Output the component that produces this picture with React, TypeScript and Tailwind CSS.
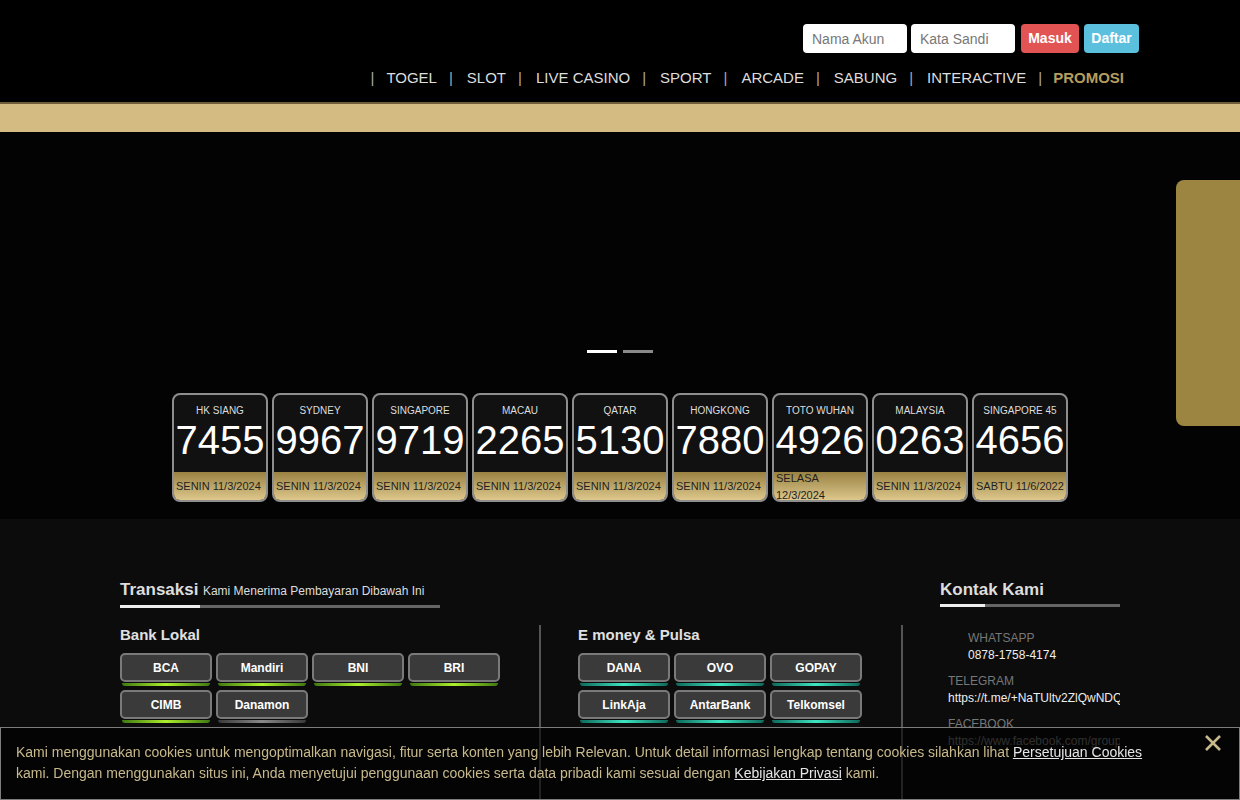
import React, { ReactElement } from "react";

const menu = ["TOGEL", "SLOT", "LIVE CASINO", "SPORT", "ARCADE", "SABUNG", "INTERACTIVE"];

const results = [
  { name: "HK SIANG", num: "7455", date: "SENIN 11/3/2024" },
  { name: "SYDNEY", num: "9967", date: "SENIN 11/3/2024" },
  { name: "SINGAPORE", num: "9719", date: "SENIN 11/3/2024" },
  { name: "MACAU", num: "2265", date: "SENIN 11/3/2024" },
  { name: "QATAR", num: "5130", date: "SENIN 11/3/2024" },
  { name: "HONGKONG", num: "7880", date: "SENIN 11/3/2024" },
  { name: "TOTO WUHAN", num: "4926", date: "SELASA 12/3/2024" },
  { name: "MALAYSIA", num: "0263", date: "SENIN 11/3/2024" },
  { name: "SINGAPORE 45", num: "4656", date: "SABTU 11/6/2022" },
];

const banks = [
  { name: "BCA", on: true },
  { name: "Mandiri", on: true },
  { name: "BNI", on: true },
  { name: "BRI", on: true },
  { name: "CIMB", on: true },
  { name: "Danamon", on: false },
];

const emoney = ["DANA", "OVO", "GOPAY", "LinkAja", "AntarBank", "Telkomsel"];

function PayButton(props: { name: string; glow: "green" | "gray" | "teal" }): ReactElement {
  const { name, glow } = props;
  return (
    <div className="w-[92px]">
      <div className="h-[29px] rounded-[5px] border-2 border-[#7a7a7a] bg-[#3a3a3a] flex items-center justify-center text-[12px] font-bold text-white">
        {name}
      </div>
      {glow === "green" && (
        <div className="mx-[2px] mt-[1px] h-[3px] rounded-b-[3px] bg-linear-to-r from-[#3f7a12] via-[#aef02c] to-[#3f7a12]" />
      )}
      {glow === "teal" && (
        <div className="mx-[2px] mt-[1px] h-[3px] rounded-b-[3px] bg-linear-to-r from-[#0d6b5b] via-[#3fe6c4] to-[#0d6b5b]" />
      )}
      {glow === "gray" && (
        <div className="mx-[2px] mt-[1px] h-[3px] rounded-b-[3px] bg-linear-to-r from-[#3a3a3a] via-[#8a8a8a] to-[#3a3a3a]" />
      )}
    </div>
  );
}

function ResultCard(props: { name: string; num: string; date: string }): ReactElement {
  const { name, num, date } = props;
  return (
    <div className="w-[96px] h-[109px] rounded-[8px] border-2 border-[#8e8e8e] bg-[#111111] overflow-hidden flex flex-col">
      <div className="pt-[10px] text-[10px] leading-[12px] text-center text-[#dddddd]">{name}</div>
      <div className="mt-[3px] text-[40px] leading-[40px] text-center text-white">{num}</div>
      <div className="mt-auto h-[28px] overflow-hidden flex items-center pl-[2px] bg-linear-to-b from-[#9a8243] to-[#dec78b] text-[11px] leading-[17px] text-[#1e1e1e]">
        <span className="pt-[1px]">{date}</span>
      </div>
    </div>
  );
}

export default function App(): ReactElement {
  return (
    <div className="min-h-screen bg-[#030303] font-['Liberation_Sans',Arial,sans-serif]">
      {/* header */}
      <header className="h-[102px] bg-black">
        <div className="flex justify-end pt-[24px] pr-[101px]">
          <input
            placeholder="Nama Akun"
            className="w-[104px] h-[29px] rounded-[4px] bg-white pl-[9px] text-[14px] text-[#333] placeholder:text-[#777] outline-none"
          />
          <input
            placeholder="Kata Sandi"
            className="ml-[4px] w-[104px] h-[29px] rounded-[4px] bg-white pl-[9px] text-[14px] text-[#333] placeholder:text-[#777] outline-none"
          />
          <button className="ml-[6px] w-[58px] h-[29px] rounded-[4px] bg-[#e25454] text-white text-[14px] font-bold">
            Masuk
          </button>
          <button className="ml-[5px] w-[55px] h-[29px] rounded-[4px] bg-[#5bc0de] text-white text-[14px] font-bold">
            Daftar
          </button>
        </div>
        <nav className="flex justify-end mt-[16px] pr-[116px] text-[15px] leading-[17px] text-[#dddddd]">
          {menu.map((m, i) => (
            <React.Fragment key={m}>
              <span className={(i === 0 ? "ml-[12px] mr-[12px]" : "ml-[12px] mr-[14px]") + " text-[#aaaaaa]"}>|</span>
              <a>{m}</a>
            </React.Fragment>
          ))}
          <span className="ml-[12px] mr-[11px] text-[#aaaaaa]">|</span>
          <a className="font-bold text-[#b49d5f]">PROMOSI</a>
        </nav>
      </header>
      <div className="h-[30px] bg-[#d4bb82] border-t-2 border-[#6e5d38]" />

      {/* slider */}
      <div className="h-[255px] flex justify-center gap-[6px] pt-[218px]">
        <div className="w-[30px] h-[3px] bg-white" />
        <div className="w-[30px] h-[3px] bg-[#8a8a8a]" />
      </div>

      {/* results */}
      <div className="flex justify-center gap-[4px] pt-[6px] pb-[17px]">
        {results.map((r) => (
          <ResultCard key={r.name} {...r} />
        ))}
      </div>

      {/* footer */}
      <footer className="bg-[#0c0c0c] pt-[61px] pb-[80px]">
        <div className="flex pl-[120px]">
          <div className="w-[783px]">
            <div className="leading-[20px] text-[#dddddd]">
              <span className="text-[17px] font-bold">Transaksi</span>{" "}
              <span className="text-[12px]">Kami Menerima Pembayaran Dibawah Ini</span>
            </div>
            <div className="mt-[4px] flex w-[320px] h-[3px]">
              <div className="w-[80px] bg-[#eeeeee]" />
              <div className="flex-1 bg-[#666666]" />
            </div>
            <div className="mt-[17px] flex">
              <div className="w-[421px] h-[200px] border-r-2 border-[#555555] pt-[1px]">
                <div className="text-[15px] leading-[18px] font-bold text-[#e0e0e0]">Bank Lokal</div>
                <div className="mt-[9px] flex flex-wrap w-[400px] gap-x-[4px] gap-y-[4px]">
                  {banks.map((b) => (
                    <PayButton key={b.name} name={b.name} glow={b.on ? "green" : "gray"} />
                  ))}
                </div>
              </div>
              <div className="w-[362px] h-[200px] border-r-2 border-[#555555] pl-[37px] pt-[1px]">
                <div className="text-[15px] leading-[18px] font-bold text-[#e0e0e0]">E money &amp; Pulsa</div>
                <div className="mt-[9px] flex flex-wrap w-[290px] gap-x-[4px] gap-y-[4px]">
                  {emoney.map((e) => (
                    <PayButton key={e} name={e} glow="teal" />
                  ))}
                </div>
              </div>
            </div>
          </div>
          <div className="ml-[37px] w-[180px]">
            <div className="text-[17px] leading-[20px] font-bold text-[#dddddd]">Kontak Kami</div>
            <div className="mt-[4px] flex w-[180px] h-[3px]">
              <div className="w-[45px] bg-[#eeeeee]" />
              <div className="flex-1 bg-[#666666]" />
            </div>
            <div className="mt-[23px] text-[12px] leading-[17px] whitespace-nowrap overflow-hidden">
              <div className="pl-[28px]">
                <div className="text-[#777777]">WHATSAPP</div>
                <div className="text-[#eeeeee]">0878-1758-4174</div>
              </div>
              <div className="pl-[8px] mt-[9px]">
                <div className="text-[#777777]">TELEGRAM</div>
                <div className="text-[#eeeeee]">https://t.me/+NaTUltv2ZlQwNDQ1</div>
              </div>
              <div className="pl-[8px] mt-[9px]">
                <div className="text-[#777777]">FACEBOOK</div>
                <div className="text-[#777777]">https://www.facebook.com/groups/</div>
              </div>
            </div>
          </div>
        </div>
      </footer>

      {/* floating side tab */}
      <div className="fixed top-[180px] right-0 w-[64px] h-[246px] rounded-l-[8px] bg-[#9b8541]" />

      {/* cookie banner */}
      <div className="fixed bottom-0 left-0 right-0 h-[73px] border border-[#7d7d7d] bg-black/60">
        <p className="pl-[15px] pr-[80px] pt-[14px] text-[14px] leading-[21px] text-[#c8b98c]">
          Kami menggunakan cookies untuk mengoptimalkan navigasi, fitur serta konten yang lebih Relevan. Untuk
          detail informasi lengkap tentang cookies silahkan lihat{" "}
          <a className="underline text-[#e6e6e6]">Persetujuan Cookies</a> kami. Dengan menggunakan situs ini, Anda
          menyetujui penggunaan cookies serta data pribadi kami sesuai dengan{" "}
          <a className="underline text-[#e6e6e6]">Kebijakan Privasi</a> kami.
        </p>
        <svg
          className="absolute right-[18px] top-[7px]"
          width="16"
          height="16"
          viewBox="0 0 16 16"
          fill="none"
          stroke="#c8b98c"
          strokeWidth="2.6"
        >
          <path d="M1 1l14 14M15 1L1 15" />
        </svg>
      </div>
    </div>
  );
}
